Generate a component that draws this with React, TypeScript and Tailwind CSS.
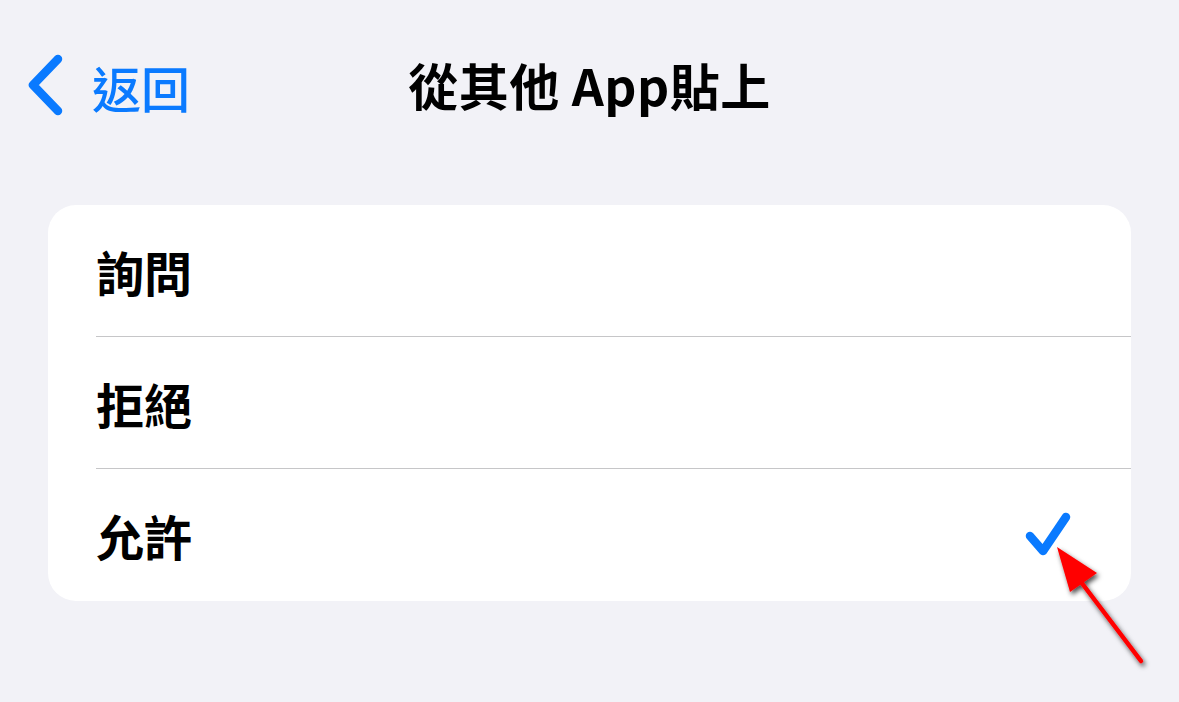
import React from "react";

const font = { fontFamily: '"Noto Sans CJK TC", "Noto Sans", sans-serif' };

const rows = [
  { label: "詢問", checked: false },
  { label: "拒絕", checked: false },
  { label: "允許", checked: true },
];

const Check = () => (
  <svg width="52" height="46" viewBox="0 0 52 46" className="block">
    <path
      d="M6 24 L19 39 L42 5"
      fill="none"
      stroke="#0a7aff"
      strokeWidth="8.5"
      strokeLinecap="round"
      strokeLinejoin="round"
    />
  </svg>
);

export default function App() {
  return (
    <div className="relative h-[702px] w-[1179px] overflow-hidden bg-[#f2f2f7]" style={font}>
      {/* nav bar */}
      <div className="grid h-[168px] grid-cols-[1fr_auto_1fr] items-center">
        <div className="flex items-center pl-[26px] pt-[4px]">
          <svg width="44" height="64" viewBox="0 0 44 64" className="block">
            <path
              d="M32 5 L7 31 L32 57"
              fill="none"
              stroke="#0a7aff"
              strokeWidth="8.5"
              strokeLinecap="round"
              strokeLinejoin="round"
            />
          </svg>
          <span className="ml-[22px] text-[49px] font-medium leading-none text-[#0a7aff]">返回</span>
        </div>
        <div className="text-[50px] font-bold leading-none tracking-[0.5px] text-black">從其他 App貼上</div>
        <div />
      </div>

      {/* options card */}
      <div className="mx-[48px] mt-[37px] overflow-hidden rounded-[28px] bg-white">
        {rows.map((r, i) => (
          <div key={r.label} className="pl-[48px]">
            <div
              className={
                "flex h-[132px] items-center justify-between pr-[55px] " +
                (i < rows.length - 1 ? "border-b border-[#c6c6c8]" : "")
              }
            >
              <span className="text-[48px] font-bold leading-none text-black">{r.label}</span>
              {r.checked && <Check />}
            </div>
          </div>
        ))}
      </div>

      {/* red annotation arrow */}
      <svg className="pointer-events-none absolute left-0 top-0" width="1179" height="702">
        <defs>
          <filter id="sh" x="-50%" y="-50%" width="200%" height="200%">
            <feDropShadow dx="2" dy="3" stdDeviation="2.5" floodColor="#000" floodOpacity="0.7" />
          </filter>
        </defs>
        <g filter="url(#sh)">
          <line x1="1141" y1="661" x2="1078" y2="578" stroke="#ff0000" strokeWidth="4.5" strokeLinecap="round" />
          <polygon points="1057,547 1070,592 1097,573" fill="#ff0000" />
        </g>
      </svg>
    </div>
  );
}
